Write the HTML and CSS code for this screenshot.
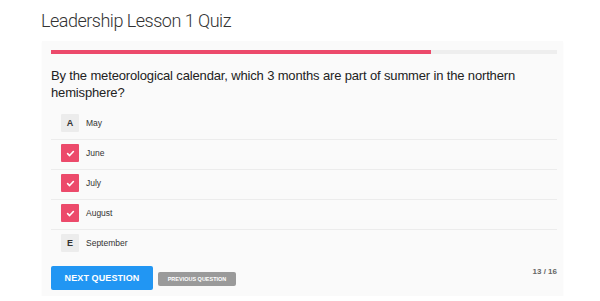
FILE: index.html
```html
<!DOCTYPE html>
<html>
<head>
    <meta charset="UTF-8">
    <title>Leadership Lesson 1 Quiz</title>
    <link rel="stylesheet" href="styles.css">
</head>
<body>
    <h1 class="quiz-title">Leadership Lesson 1 Quiz</h1>
    <div class="card">
        <div class="progress">
            <div class="progress-fill" style="width: 75%"></div>
        </div>
        <p class="question">By the meteorological calendar, which 3 months are part of summer in the northern hemisphere?</p>
        <ul class="answers">
            <li class="answer">
                <span class="badge">A</span>
                <span class="label">May</span>
            </li>
            <li class="answer checked">
                <span class="badge"><svg width="9" height="9" viewBox="0 0 10 10"><path d="M1.8 5.2 L4 7.3 L8.2 2.8" fill="none" stroke="#fff" stroke-width="1.8" stroke-linecap="round" stroke-linejoin="round"/></svg></span>
                <span class="label">June</span>
            </li>
            <li class="answer checked">
                <span class="badge"><svg width="9" height="9" viewBox="0 0 10 10"><path d="M1.8 5.2 L4 7.3 L8.2 2.8" fill="none" stroke="#fff" stroke-width="1.8" stroke-linecap="round" stroke-linejoin="round"/></svg></span>
                <span class="label">July</span>
            </li>
            <li class="answer checked">
                <span class="badge"><svg width="9" height="9" viewBox="0 0 10 10"><path d="M1.8 5.2 L4 7.3 L8.2 2.8" fill="none" stroke="#fff" stroke-width="1.8" stroke-linecap="round" stroke-linejoin="round"/></svg></span>
                <span class="label">August</span>
            </li>
            <li class="answer">
                <span class="badge">E</span>
                <span class="label">September</span>
            </li>
        </ul>
        <div class="footer">
            <div class="buttons">
                <button class="btn-next">NEXT QUESTION</button>
                <button class="btn-prev">PREVIOUS QUESTION</button>
            </div>
            <span class="counter">13 / 16</span>
        </div>
    </div>
</body>
</html>
```

FILE: styles.css
```css
* { margin: 0; padding: 0; box-sizing: border-box; }
body {
    background: #fff;
    font-family: "Liberation Sans", Arial, sans-serif;
    color: #222;
}
.quiz-title {
    font-family: Roboto, "Liberation Sans", sans-serif;
    font-weight: 300;
    font-size: 18px;
    letter-spacing: -0.5px;
    line-height: 24px;
    color: #333;
    padding: 9px 0 0 41px;
    height: 41px;
}
.card {
    margin-left: 42px;
    width: 521px;
    background: #fafafa;
    padding: 9px 6px 6px 9px;
    box-shadow: 0 1px 2px rgba(0,0,0,0.03);
}
.progress {
    height: 4px;
    background: #eeeeee;
}
.progress-fill {
    height: 100%;
    background: #ec4a6b;
}
.question {
    font-size: 13px;
    letter-spacing: -0.15px;
    line-height: 17px;
    color: #222;
    margin-top: 13px;
    margin-bottom: 9px;
}
.answers { list-style: none; }
.answer {
    display: flex;
    align-items: center;
    padding: 4px 0 7px 10px;
    border-bottom: 1px solid #ececec;
}
.answer:last-child { border-bottom: none; }
.badge {
    width: 18px;
    height: 18px;
    display: flex;
    align-items: center;
    justify-content: center;
    background: #ececec;
    font-size: 9px;
    font-weight: bold;
    color: #333;
    border-radius: 1px;
}
.checked .badge { background: #ec4a6b; }
.label {
    margin-left: 7px;
    font-size: 8.5px;
    color: #333;
}
.footer {
    display: flex;
    justify-content: space-between;
    align-items: flex-start;
    margin-top: 7px;
}
.buttons {
    display: flex;
    align-items: center;
    gap: 5px;
}
.btn-next {
    width: 102px;
    height: 24px;
    border: none;
    border-radius: 2px;
    background: #2196f3;
    color: #fff;
    font-family: "Liberation Sans", Arial, sans-serif;
    font-weight: bold;
    font-size: 9px;
    letter-spacing: 0.1px;
}
.btn-prev {
    width: 78px;
    height: 14px;
    border: none;
    border-radius: 2px;
    background: #9a9a9a;
    color: #fff;
    font-family: "Liberation Sans", Arial, sans-serif;
    font-weight: bold;
    font-size: 5.5px;
    margin-top: 2px;
}
.counter {
    font-size: 8px;
    font-weight: bold;
    color: #666;
    margin-top: 1px;
}
```
